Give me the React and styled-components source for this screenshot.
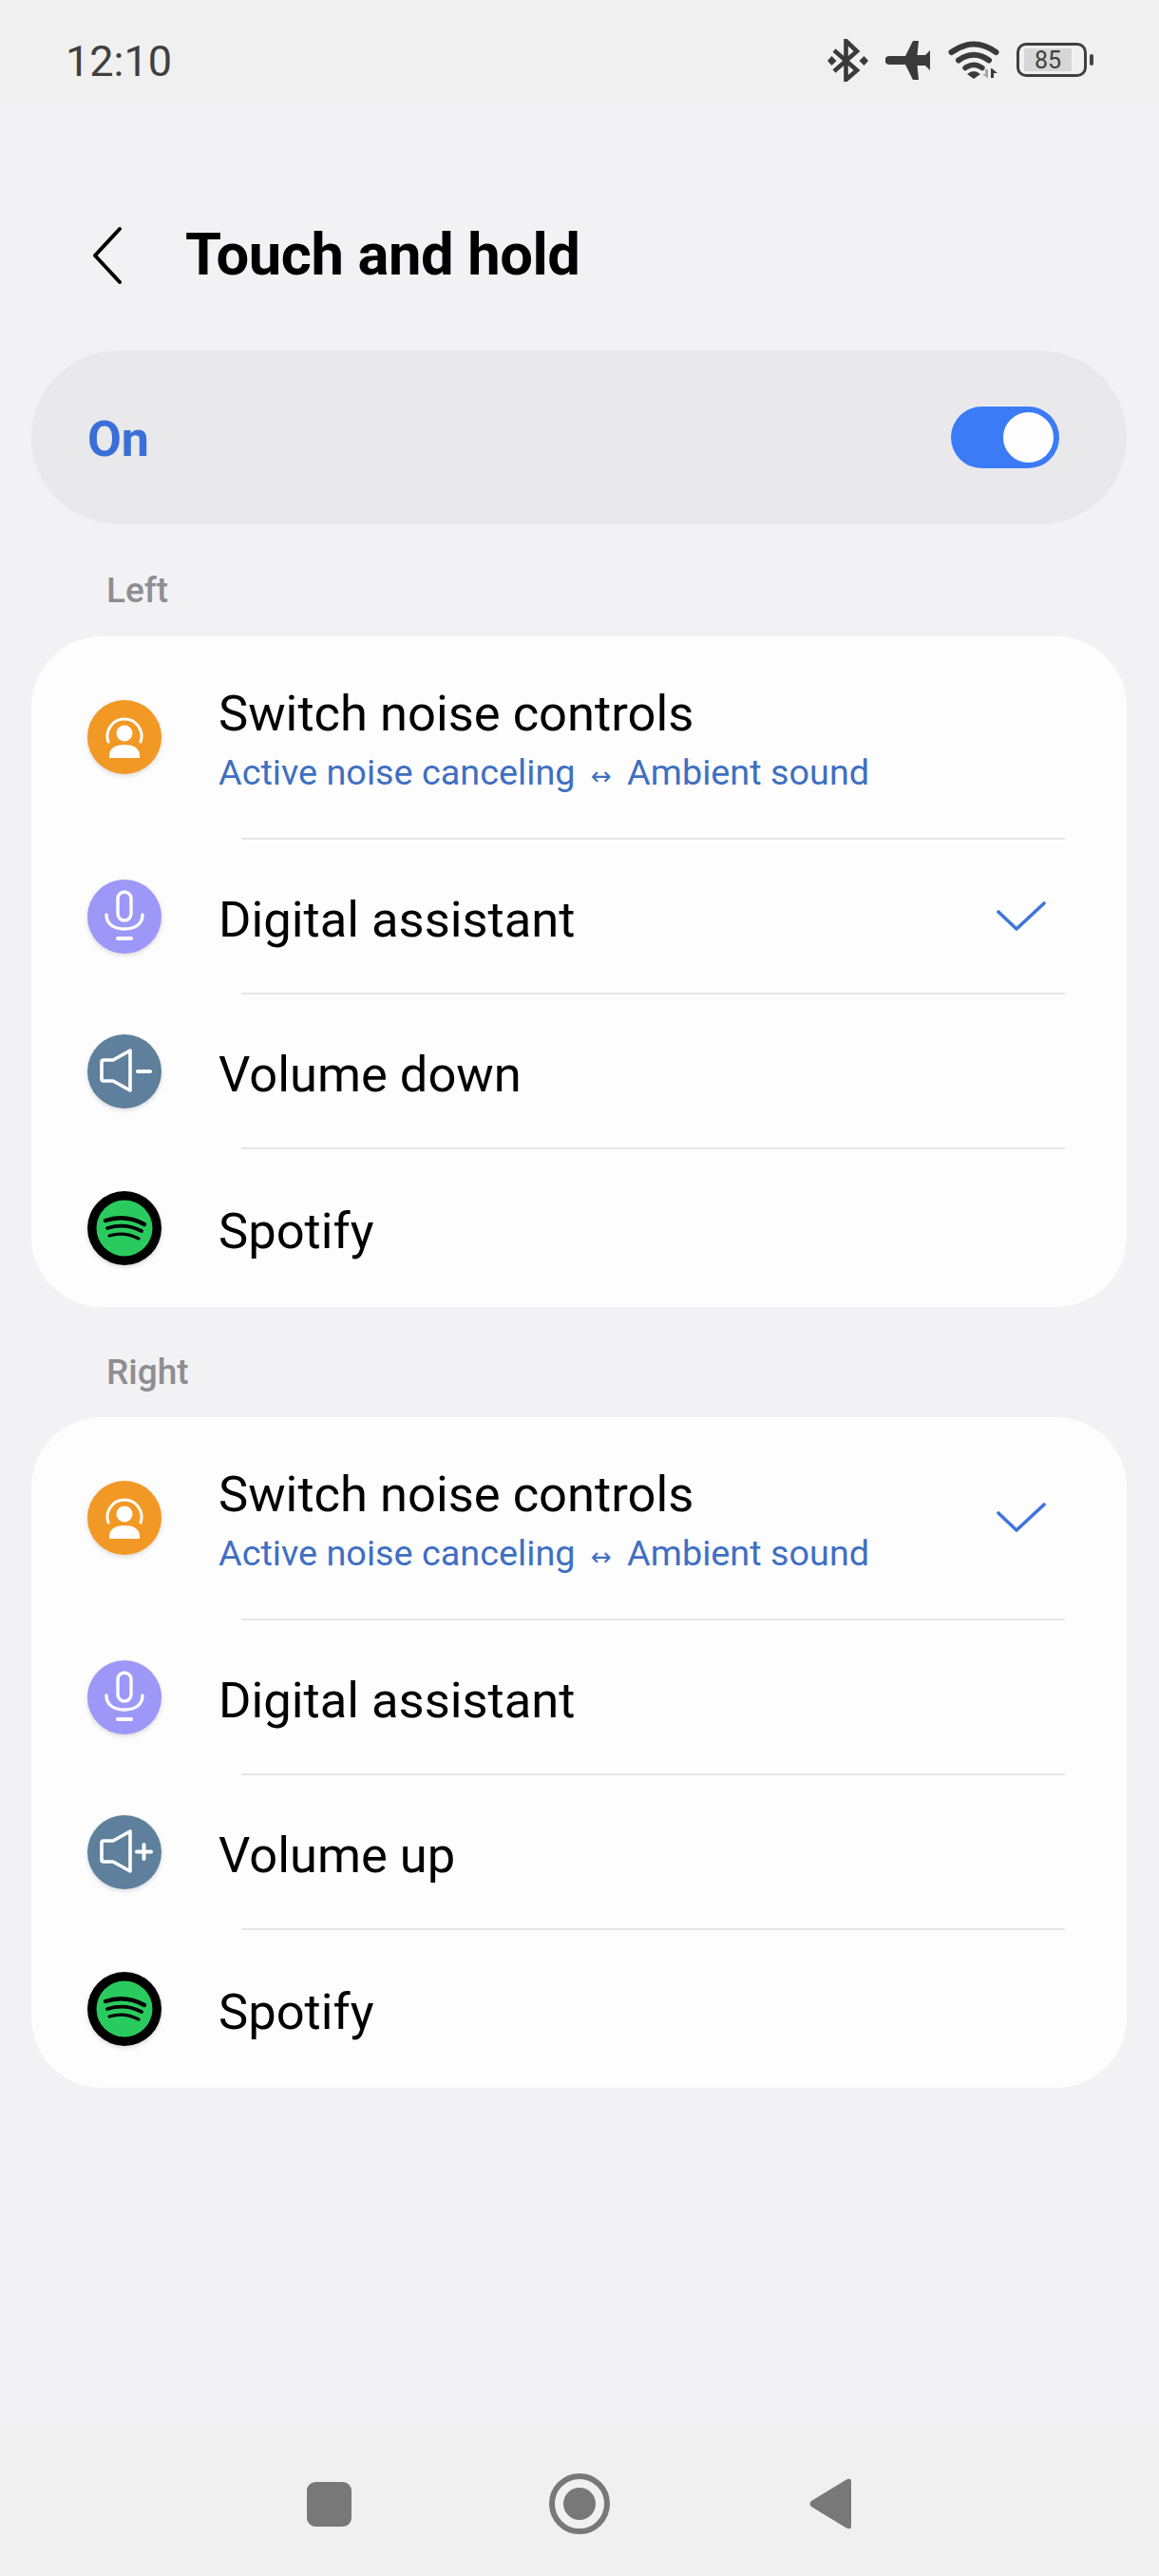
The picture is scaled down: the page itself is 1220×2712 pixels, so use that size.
import React from "react";
import styled, { createGlobalStyle } from "styled-components";

const Global = createGlobalStyle`
  html, body { margin: 0; padding: 0; background: #f2f2f4; }
  * { box-sizing: border-box; }
  body { font-family: Roboto, "Liberation Sans", sans-serif; }
`;

const Page = styled.div`
  width: 1220px;
  height: 2712px;
  display: flex;
  flex-direction: column;
  background: #f2f2f4;
  overflow: hidden;
`;

const StatusBar = styled.div`
  height: 108px;
  padding: 18px 69px 0 69px;
  display: flex;
  align-items: center;
  justify-content: space-between;
  background: #f0f0f1;
`;

const Time = styled.span`
  font-size: 45px;
  line-height: 1;
  color: #3f3f3f;
  padding-top: 2px;
`;

const StatusIcons = styled.div`
  display: flex;
  align-items: center;
  gap: 18px;
`;

const Battery = styled.div`
  display: flex;
  align-items: center;
  gap: 3px;
`;

const BatteryBody = styled.div`
  width: 74px;
  height: 36px;
  border: 3.5px solid #3f3f3f;
  border-radius: 10px;
  padding: 3px 13px 3px 5px;
  display: flex;
`;

const BatteryLevel = styled.div`
  flex: 1;
  background: #d6d6d6;
  display: flex;
  align-items: center;
  justify-content: center;
  font-size: 25px;
  line-height: 1;
  color: #3f3f3f;
`;

const BatteryNub = styled.div`
  width: 4px;
  height: 12px;
  border-radius: 2px;
  background: #444;
`;

const Header = styled.header`
  height: 261px;
  padding: 60px 0 0 96px;
  display: flex;
  align-items: center;
  gap: 65px;
`;

const Title = styled.h1`
  margin: 0;
  font-size: 61.5px;
  font-weight: 700;
  line-height: 1;
  color: #000;
  letter-spacing: -0.4px;
`;

const MasterPill = styled.div`
  margin: 0 34px 0 33px;
  height: 183px;
  border-radius: 92px;
  background: #e9e9eb;
  display: flex;
  align-items: center;
  justify-content: space-between;
  padding: 0 71px 0 59px;
`;

const OnLabel = styled.span`
  font-size: 52px;
  font-weight: 700;
  color: #3a6fd8;
  line-height: 1;
  padding-top: 5px;
`;

const Toggle = styled.div`
  width: 114px;
  height: 65px;
  border-radius: 33px;
  background: #3b7bf6;
  padding: 6px;
  display: flex;
  justify-content: flex-end;
`;

const Knob = styled.div`
  width: 53px;
  height: 53px;
  border-radius: 50%;
  background: #fdfdfe;
`;

const SectionLabel = styled.div`
  height: ${p => p.$h}px;
  padding: 21px 0 0 112px;
  display: flex;
  align-items: center;
  font-size: 37px;
  font-weight: 500;
  color: #8e8e92;
`;

const Card = styled.section`
  margin: 0 34px 0 33px;
  height: 706px;
  border-radius: 74px;
  background: #fdfdfe;
  display: flex;
  flex-direction: column;
`;

const Row = styled.div`
  height: ${p => p.$h}px;
  padding: 0 85px 0 59px;
  display: flex;
  align-items: center;
`;

const Avatar = styled.div`
  width: 78px;
  height: 78px;
  flex: none;
  border-radius: 50%;
  background: ${p => p.$bg};
  box-shadow: 0 2px 5px rgba(0, 0, 0, 0.14);
  display: flex;
  align-items: center;
  justify-content: center;
`;

const RowText = styled.div`
  flex: 1;
  margin-left: 60px;
  padding-top: 6px;
  display: flex;
  flex-direction: column;
`;

const RowTitle = styled.div`
  font-size: 52.5px;
  line-height: 62px;
  color: #000;
`;

const RowSub = styled.div`
  font-size: 37.8px;
  line-height: 44px;
  color: #3f6fc2;
  margin-top: 9px;
`;

const Arrow = styled.span`
  font-family: "DejaVu Sans", sans-serif;
  font-size: 26px;
  margin: 0 7px;
`;

const Divider = styled.div`
  height: 2px;
  flex: none;
  margin: 0 65px 0 221px;
  background: #e6e6e8;
`;

const NavBar = styled.nav`
  margin-top: auto;
  height: 162px;
  padding-top: 10px;
  background: #f0f0f1;
  display: flex;
  justify-content: center;
  align-items: center;
`;

const NavCell = styled.div`
  width: 264px;
  display: flex;
  justify-content: center;
`;

const NavSquare = styled.div`
  width: 47px;
  height: 47px;
  border-radius: 9px;
  background: #787878;
`;

const NavRing = styled.div`
  width: 64px;
  height: 64px;
  border-radius: 50%;
  border: 6px solid #787878;
  display: flex;
  align-items: center;
  justify-content: center;
`;

const NavDot = styled.div`
  width: 34px;
  height: 34px;
  border-radius: 50%;
  background: #787878;
`;

const Bluetooth = () => (
  <svg width="43" height="45" viewBox="0 0 43 45" fill="none">
    <path d="M7 12 L31 33 L19.5 43 V2 L31 13 L7 34" stroke="#3a3a3a" strokeWidth="4.6" strokeLinejoin="miter" />
    <path d="M4.5 18 L9.5 23 L4.5 28 L0 23 Z M38.5 18 L43 23 L38.5 28 L33.5 23 Z" fill="#3a3a3a" />
  </svg>
);

const Plane = () => (
  <svg width="48" height="41" viewBox="0 0 48 41">
    <path d="M4 16 H21 L29 0 H35 L33.5 15 H42 L47 10 V31 L42 26 H33.5 L35 41 H29 L21 25 H4 a4.5 4.5 0 0 1 0 -9 Z" fill="#3a3a3a" />
  </svg>
);

const Wifi = () => (
  <svg width="54" height="40" viewBox="0 0 54 40" fill="none">
    <path d="M3.5 12 Q27 -5 50.5 12" stroke="#3a3a3a" strokeWidth="6" strokeLinecap="round" />
    <path d="M11 20.5 Q27 9 43 20.5" stroke="#3a3a3a" strokeWidth="6" strokeLinecap="round" />
    <path d="M18 28.5 Q27 22 36 28.5" stroke="#3a3a3a" strokeWidth="5.5" strokeLinecap="round" />
    <path d="M20 35 Q27 29 34 35 L27 40 Z" fill="#3a3a3a" />
    <path d="M39 30 H42 V39 H41 L36 35 H39 Z" fill="#a9a9a9" />
    <path d="M45 39 H48 V34 H52 L46 29 H45 Z" fill="#3a3a3a" />
  </svg>
);

const Back = () => (
  <svg width="34" height="62" viewBox="0 0 34 62" fill="none">
    <path d="M30 3 L4 31 L30 59" stroke="#000" strokeWidth="4" strokeLinecap="round" strokeLinejoin="round" />
  </svg>
);

const Check = () => (
  <svg width="52" height="32" viewBox="0 0 52 32" fill="none">
    <path d="M2 11 L21 29 L50 2" stroke="#3f74dc" strokeWidth="3.6" strokeLinecap="round" strokeLinejoin="round" />
  </svg>
);

const NavBack = () => (
  <svg width="44" height="54" viewBox="0 0 44 54">
    <path d="M39 1.5 Q44 -1 44 4 V50 Q44 55 39 52.5 L2 30 Q-1 27 2 24 Z" fill="#787878" />
  </svg>
);

const NoiseGlyph = () => (
  <svg width="78" height="78" viewBox="0 0 78 78" fill="none">
    <path d="M22 44 A18 18 0 1 1 56 44" stroke="#fff" strokeWidth="3" strokeLinecap="round" />
    <circle cx="39" cy="35" r="8.5" fill="#fff" />
    <path d="M23 61 V58 C23 50 31 47 39 47 C47 47 55 50 55 58 V61 Z" fill="#fff" />
  </svg>
);

const MicGlyph = () => (
  <svg width="78" height="78" viewBox="0 0 78 78" fill="none">
    <rect x="32" y="13" width="14" height="30" rx="7" stroke="#fff" strokeWidth="3.4" />
    <path d="M20 37 C20 47 28 52 39 52 C50 52 58 47 58 37" stroke="#fff" strokeWidth="3.4" strokeLinecap="round" />
    <path d="M32 62 H46" stroke="#fff" strokeWidth="4" strokeLinecap="round" />
  </svg>
);

const VolumeGlyph = ({ plus }) => (
  <svg width="78" height="78" viewBox="0 0 78 78" fill="none">
    <path d="M17 27 H27 L45 17 V59 L27 49 H17 Q15 49 15 47 V29 Q15 27 17 27 Z" stroke="#fff" strokeWidth="3.6" strokeLinejoin="round" />
    {plus ? (
      <path d="M52 38.5 H67 M59.5 31 V46" stroke="#fff" strokeWidth="4" strokeLinecap="round" />
    ) : (
      <path d="M53 39 H66" stroke="#fff" strokeWidth="4" strokeLinecap="round" />
    )}
  </svg>
);

const SpotifyGlyph = () => (
  <svg width="78" height="78" viewBox="0 0 78 78" fill="none">
    <circle cx="39" cy="39" r="29.5" fill="#2acb5e" />
    <path d="M19 31 Q40 24 60 35" stroke="#000" strokeWidth="4.4" strokeLinecap="round" />
    <path d="M21 39 Q40 33 57 42" stroke="#000" strokeWidth="3.8" strokeLinecap="round" />
    <path d="M23 47 Q39 42 54 50" stroke="#000" strokeWidth="3.2" strokeLinecap="round" />
  </svg>
);

const ListRow = ({ h, bg, glyph, title, sub, checked }) => (
  <Row $h={h}>
    <Avatar $bg={bg}>{glyph}</Avatar>
    <RowText>
      <RowTitle>{title}</RowTitle>
      {sub && (
        <RowSub>
          Active noise canceling <Arrow>↔</Arrow> Ambient sound
        </RowSub>
      )}
    </RowText>
    {checked && <Check />}
  </Row>
);

const Section = ({ volumeLabel, plus, checkedIndex }) => (
  <Card>
    <ListRow h={212} bg="#f29824" glyph={<NoiseGlyph />} title="Switch noise controls" sub checked={checkedIndex === 0} />
    <Divider />
    <ListRow h={161} bg="#9d97f8" glyph={<MicGlyph />} title="Digital assistant" checked={checkedIndex === 1} />
    <Divider />
    <ListRow h={161} bg="#5e809c" glyph={<VolumeGlyph plus={plus} />} title={volumeLabel} />
    <Divider />
    <ListRow h={166} bg="#000" glyph={<SpotifyGlyph />} title="Spotify" />
  </Card>
);

export default function App() {
  return (
    <Page>
      <Global />
      <StatusBar>
        <Time>12:10</Time>
        <StatusIcons>
          <Bluetooth />
          <Plane />
          <Wifi />
          <Battery>
            <BatteryBody>
              <BatteryLevel>85</BatteryLevel>
            </BatteryBody>
            <BatteryNub />
          </Battery>
        </StatusIcons>
      </StatusBar>
      <Header>
        <Back />
        <Title>Touch and hold</Title>
      </Header>
      <MasterPill>
        <OnLabel>On</OnLabel>
        <Toggle>
          <Knob />
        </Toggle>
      </MasterPill>
      <SectionLabel $h={118}>Left</SectionLabel>
      <Section volumeLabel="Volume down" checkedIndex={1} />
      <SectionLabel $h={116}>Right</SectionLabel>
      <Section volumeLabel="Volume up" plus checkedIndex={0} />
      <NavBar>
        <NavCell><NavSquare /></NavCell>
        <NavCell><NavRing><NavDot /></NavRing></NavCell>
        <NavCell><NavBack /></NavCell>
      </NavBar>
    </Page>
  );
}
